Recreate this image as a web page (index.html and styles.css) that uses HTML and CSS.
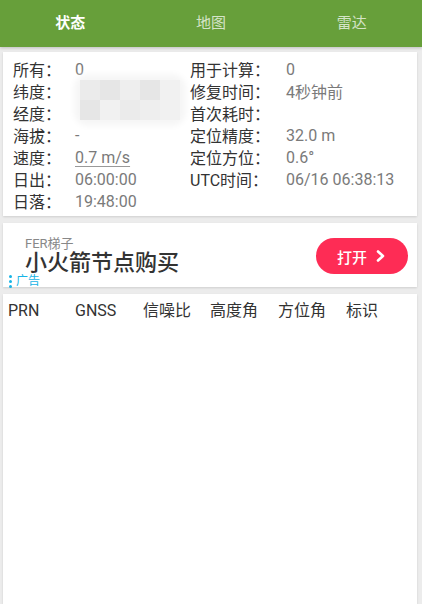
FILE: index.html
```html
<!DOCTYPE html>
<html lang="zh">
<head>
    <meta charset="UTF-8">
    <meta name="viewport" content="width=device-width, initial-scale=1.0">
    <title>GPS 状态</title>
    <link rel="stylesheet" href="styles.css">
</head>
<body>
    <!-- Tabs -->
    <div class="tabs">
        <div class="tab active">状态</div>
        <div class="tab">地图</div>
        <div class="tab">雷达</div>
    </div>

    <!-- Status card -->
    <div class="card status">
        <div class="grid">
            <span class="label">所有：</span><span class="value">0</span>
            <span class="label">用于计算：</span><span class="value">0</span>

            <span class="label">纬度：</span><span class="value"></span>
            <span class="label">修复时间：</span><span class="value">4秒钟前</span>

            <span class="label">经度：</span><span class="value"></span>
            <span class="label">首次耗时：</span><span class="value"></span>

            <span class="label">海拔：</span><span class="value">-</span>
            <span class="label">定位精度：</span><span class="value">32.0 m</span>

            <span class="label">速度：</span><span class="value link">0.7 m/s</span>
            <span class="label">定位方位：</span><span class="value">0.6°</span>

            <span class="label">日出：</span><span class="value">06:00:00</span>
            <span class="label">UTC时间：</span><span class="value">06/16 06:38:13</span>

            <span class="label">日落：</span><span class="value">19:48:00</span>
            <span class="label"></span><span class="value"></span>
        </div>
        <!-- pixelated coordinates -->
        <div class="mosaic">
            <i class="m1"></i><i class="m2"></i><i class="m3"></i><i class="m2"></i><i class="m4"></i>
            <i class="m2"></i><i class="m4"></i><i class="m1"></i><i class="m3"></i><i class="m4"></i>
        </div>
    </div>

    <!-- Ad card -->
    <div class="card ad">
        <div class="ad-text">
            <div class="ad-source">FER梯子</div>
            <div class="ad-title">小火箭节点购买</div>
        </div>
        <button class="open-btn">打开
            <svg width="12" height="14" viewBox="0 0 12 14"><path d="M3 2.5 L8 7 L3 11.5" fill="none" stroke="#fff" stroke-width="2.6" stroke-linecap="round" stroke-linejoin="round"/></svg>
        </button>
        <div class="ad-tag"><span class="dots"><i></i><i></i><i></i></span>广告</div>
    </div>

    <!-- Satellite table -->
    <div class="card table">
        <div class="thead">
            <span>PRN</span>
            <span>GNSS</span>
            <span>信噪比</span>
            <span>高度角</span>
            <span>方位角</span>
            <span>标识</span>
        </div>
    </div>
</body>
</html>
```

FILE: styles.css
```css
body {
    font-family: Roboto, "Noto Sans CJK SC", sans-serif;
    background-color: #ececec;
    margin: 0;
    height: 604px;
    overflow: hidden;
    display: flex;
    flex-direction: column;
}
.tabs {
    display: flex;
    height: 47px;
    background: #679f3a;
    box-shadow: 0 1px 3px rgba(0, 0, 0, 0.2);
}
.tab {
    flex: 1;
    display: flex;
    justify-content: center;
    align-items: center;
    color: rgba(255, 255, 255, 0.72);
    font-size: 15px;
    padding-bottom: 4px;
}
.tab.active {
    color: #fff;
    font-weight: bold;
}
.card {
    background: #fff;
    margin: 0 5px 0 3px;
    box-shadow: 0 1px 2px rgba(0, 0, 0, 0.12);
    position: relative;
}
.status {
    margin-top: 5px;
    padding: 6px 10px 4px 10px;
}
.grid {
    display: grid;
    grid-template-columns: 62px 115px 96px auto;
    grid-auto-rows: 22px;
    font-size: 16px;
    align-items: center;
}
.label {
    color: #333;
}
.value {
    color: #7a7a7a;
}
.link {
    text-decoration: underline;
    text-decoration-color: #999;
    text-underline-offset: 3px;
}
.mosaic {
    position: absolute;
    left: 77px;
    top: 28px;
    display: grid;
    grid-template-columns: repeat(5, 20px);
    grid-auto-rows: 20px;
    box-shadow: 0 0 6px 6px #f6f6f6;
    background: #f6f6f6;
    border-radius: 8px;
}
.mosaic i.m1 { background: #ebebeb; }
.mosaic i.m2 { background: #e6e6e6; }
.mosaic i.m3 { background: #eeeeee; }
.mosaic i.m4 { background: #f1f1f1; }
.ad {
    margin-top: 7px;
    height: 64px;
    display: flex;
    align-items: center;
    justify-content: space-between;
    padding: 0 9px 0 22px;
}
.ad-text {
    padding-bottom: 1px;
}
.ad-source {
    font-size: 13px;
    color: #888;
    line-height: 17px;
}
.ad-title {
    font-size: 22px;
    color: #333;
    line-height: 22px;
    font-weight: 500;
}
.open-btn {
    width: 92px;
    height: 36px;
    border: none;
    border-radius: 18px;
    background: #fe2c55;
    color: #fff;
    font-family: inherit;
    font-size: 15px;
    font-weight: 500;
    display: flex;
    align-items: center;
    justify-content: center;
    gap: 8px;
    margin-top: 2px;
}
.ad-tag {
    position: absolute;
    left: 6px;
    bottom: -1px;
    font-size: 12px;
    line-height: 13px;
    color: #17b4e6;
    display: flex;
    align-items: center;
    gap: 4px;
}
.dots {
    display: flex;
    flex-direction: column;
    gap: 2px;
}
.dots i {
    width: 3px;
    height: 3px;
    border-radius: 50%;
    background: #17b4e6;
}
.table {
    margin-top: 7px;
    flex: 1;
    margin-bottom: 0;
}
.thead {
    display: grid;
    grid-template-columns: 67px 68px 67px 68px 68px auto;
    padding: 6px 0 0 5px;
    font-size: 16px;
    color: #333;
    line-height: 22px;
}
```
